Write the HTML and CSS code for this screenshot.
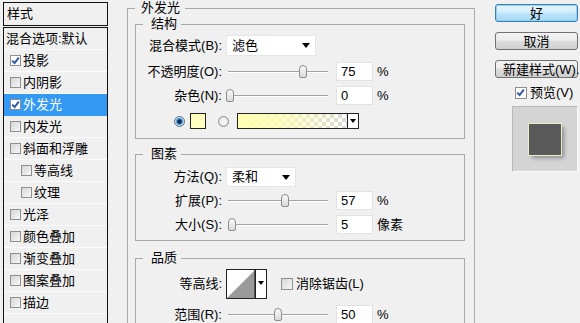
FILE: index.html
```html
<!DOCTYPE html>
<html lang="zh-CN">
<head>
<meta charset="utf-8">
<title>图层样式</title>
<link rel="stylesheet" href="styles.css">
</head>
<body>
<div class="dialog">
  <nav class="side">
    <div class="side-head">样式</div>
    <ul class="side-list">
      <li class="item plain">混合选项:默认</li>
      <li class="item"><span class="cb on"><svg viewBox="0 0 9 9"><path d="M1.2 4.6 L3.6 7 L7.8 1.6" /></svg></span>投影</li>
      <li class="item"><span class="cb"></span>内阴影</li>
      <li class="item sel"><span class="cb on"><svg viewBox="0 0 9 9"><path d="M1.2 4.6 L3.6 7 L7.8 1.6" /></svg></span>外发光</li>
      <li class="item"><span class="cb"></span>内发光</li>
      <li class="item"><span class="cb"></span>斜面和浮雕</li>
      <li class="item sub"><span class="cb"></span>等高线</li>
      <li class="item sub"><span class="cb"></span>纹理</li>
      <li class="item"><span class="cb"></span>光泽</li>
      <li class="item"><span class="cb"></span>颜色叠加</li>
      <li class="item"><span class="cb"></span>渐变叠加</li>
      <li class="item"><span class="cb"></span>图案叠加</li>
      <li class="item"><span class="cb"></span>描边</li>
    </ul>
  </nav>

  <main class="main">
    <fieldset class="group outer">
      <legend>外发光</legend>

      <fieldset class="group inner sec-struct">
        <legend>结构</legend>
        <div class="row r-blend">
          <span class="lbl">混合模式(B):</span>
          <div class="select sel-blend"><span>滤色</span><i class="arrow"></i></div>
        </div>
        <div class="row r-num r-opacity">
          <span class="lbl">不透明度(O):</span>
          <div class="slider"><span class="thumb" style="left:73px"></span></div>
          <div class="num">75</div><span class="unit">%</span>
        </div>
        <div class="row r-num r-noise">
          <span class="lbl">杂色(N):</span>
          <div class="slider"><span class="thumb" style="left:0px"></span></div>
          <div class="num">0</div><span class="unit">%</span>
        </div>
        <div class="row r-color">
          <span class="radio on"></span>
          <span class="swatch"></span>
          <span class="radio radio-2"></span>
          <div class="gradient"><span class="grad-fill"></span><span class="grad-arrow"><i class="arrow small"></i></span></div>
        </div>
      </fieldset>

      <fieldset class="group inner sec-elem">
        <legend>图素</legend>
        <div class="row r-method">
          <span class="lbl">方法(Q):</span>
          <div class="select sel-method"><span>柔和</span><i class="arrow"></i></div>
        </div>
        <div class="row r-num r-spread">
          <span class="lbl">扩展(P):</span>
          <div class="slider"><span class="thumb" style="left:55px"></span></div>
          <div class="num">57</div><span class="unit">%</span>
        </div>
        <div class="row r-num r-size">
          <span class="lbl">大小(S):</span>
          <div class="slider"><span class="thumb" style="left:2px"></span></div>
          <div class="num">5</div><span class="unit">像素</span>
        </div>
      </fieldset>

      <fieldset class="group inner sec-quality">
        <legend>品质</legend>
        <div class="row r-contour">
          <span class="lbl">等高线:</span>
          <div class="contour">
            <span class="curve"><svg viewBox="0 0 28 28" preserveAspectRatio="none"><polygon points="0,28 28,0 28,28" fill="#9a9a9a"/><rect x="27" y="0" width="1" height="28" fill="#555"/></svg></span>
            <span class="c-arrow"><i class="arrow small"></i></span>
          </div>
          <span class="cb aa"></span><span class="aa-text">消除锯齿(L)</span>
        </div>
        <div class="row r-num r-range">
          <span class="lbl">范围(R):</span>
          <div class="slider"><span class="thumb" style="left:48px"></span></div>
          <div class="num">50</div><span class="unit">%</span>
        </div>
      </fieldset>
    </fieldset>
  </main>

  <aside class="actions">
    <button class="btn btn-ok">好</button>
    <button class="btn btn-cancel">取消</button>
    <button class="btn btn-new">新建样式(W)...</button>
    <div class="preview-toggle"><span class="cb on"><svg viewBox="0 0 9 9"><path d="M1.2 4.6 L3.6 7 L7.8 1.6" /></svg></span><span>预览(V)</span></div>
    <div class="preview"><span class="preview-square"></span></div>
  </aside>
</div>
</body>
</html>
```

FILE: styles.css
```css
* { box-sizing: border-box; }
html, body { margin: 0; padding: 0; }
body {
  width: 580px;
  height: 323px;
  overflow: hidden;
  background: #f0f0f0;
  color: #000;
  font: 13px/16px "Liberation Sans", "Noto Sans CJK SC", sans-serif;
}
.dialog {
  display: flex;
  align-items: flex-start;
  padding-left: 3px;
  height: 323px;
}

/* ---------- left list ---------- */
.side { width: 105px; flex: none; margin-top: 2px; }
.side-head {
  height: 24px;
  border: 1px solid #111;
  line-height: 22px;
  padding-left: 3px;
}
.side-list {
  list-style: none;
  margin: 1px 0 0;
  padding: 0;
  border: 1px solid #111;
  height: 310px;
}
.item {
  height: 22px;
  border-bottom: 1px solid #fbfbfb;
  display: flex;
  align-items: center;
  padding-left: 6px;
  white-space: nowrap;
}
.item.plain { padding-left: 2px; }
.item.sub { padding-left: 17px; }
.item.sel { background: #3399f3; color: #fff; border-bottom-color: #3399f3; }

.cb {
  width: 11px;
  height: 11px;
  flex: none;
  display: inline-flex;
  border: 1px solid #8e8f8f;
  background: linear-gradient(135deg, #d6d6d6, #f7f7f7);
  margin-right: 2px;
}
.cb.on { background: #fff; }
.cb svg { width: 9px; height: 9px; }
.cb path { fill: none; stroke: #2c56a8; stroke-width: 1.9; }

/* ---------- main groups ---------- */
.main { width: 348px; flex: none; margin-left: 19px; }
.group {
  margin: 0;
  min-width: 0;
  border: 1px solid #a9a9a9;
}
.group > legend { line-height: 16px; padding: 0; }
.outer { padding: 0 9px 0 7px; height: 360px; }
.outer > legend { padding: 0 5px 0 6px; }
.inner { padding: 0; }
.inner > legend { margin-left: 7px; padding: 0 4px 0 8px; }

.sec-struct { padding-bottom: 9px; }
.sec-elem { margin-top: 7px; padding-bottom: 6px; }
.sec-quality { margin-top: 9px; padding-bottom: 20px; }

.row { display: flex; align-items: center; white-space: nowrap; }
.lbl { width: 86px; flex: none; text-align: right; margin-right: 4px; }

.r-blend { margin-top: 3px; height: 21px; }
.r-num { height: 19px; }
.r-opacity { margin-top: 6px; }
.r-noise { margin-top: 5px; }
.r-color { margin-top: 8px; height: 16px; }
.r-method { margin-top: 5px; height: 20px; }
.r-spread { margin-top: 4px; }
.r-size { margin-top: 5px; }
.r-contour { margin-top: 3px; height: 30px; }
.r-range { margin-top: 6px; }

.select {
  height: 100%;
  background: #fff;
  border: 1px solid #e6e6e6;
  display: flex;
  align-items: center;
  padding-left: 5px;
}
.sel-blend { width: 90px; }
.sel-method { width: 70px; }
.arrow {
  display: block;
  width: 0;
  height: 0;
  margin-left: auto;
  margin-right: 5px;
  border-top: 5px solid #000;
  border-left: 4px solid transparent;
  border-right: 4px solid transparent;
}
.arrow.small {
  margin: 0;
  border-top-width: 4px;
  border-left-width: 3px;
  border-right-width: 3px;
}

.slider {
  position: relative;
  width: 102px;
  height: 100%;
  flex: none;
  background:
    linear-gradient(#a4a4a4, #a4a4a4) no-repeat 2px 9px / 100px 1px,
    linear-gradient(#ffffff, #ffffff) no-repeat 2px 10px / 100px 1px;
}
.thumb {
  position: absolute;
  top: 3px;
  width: 8px;
  height: 13px;
  border: 1px solid #8c8c8c;
  border-radius: 4px 4px 2px 2px;
  background: linear-gradient(#fbfbfb, #d9d9d9);
}
.num {
  width: 37px;
  height: 19px;
  flex: none;
  margin-left: 8px;
  padding-left: 4px;
  line-height: 17px;
  background: #fff;
  border: 1px solid #e3e3e3;
}
.unit { margin-left: 4px; }

.radio {
  width: 11px;
  height: 11px;
  flex: none;
  border-radius: 50%;
  border: 1px solid #8c8c8c;
  background: radial-gradient(circle, #f4f4f4 0 2px, #dedede 5px);
  margin-left: 38px;
}
.radio.on {
  border-color: #5c6c7c;
  background: radial-gradient(circle, #0d2c52 0 1.5px, #2f78c0 2.5px, #8fc2ea 3.6px, #eef4f8 4.6px);
}
.radio-2 { margin-left: 12px; }
.swatch {
  width: 16px;
  height: 16px;
  flex: none;
  margin-left: 5px;
  border: 1px solid #222;
  background: #ffffbe;
}
.gradient {
  width: 122px;
  height: 16px;
  margin-left: 8px;
  display: flex;
  border: 1px solid #222;
}
.grad-fill {
  flex: 1;
  background-color: #fff;
  background-image:
    linear-gradient(to right, #ffffb4, rgba(255, 255, 180, 0.85) 35%, rgba(255, 255, 190, 0)),
    linear-gradient(45deg, #d8d8d8 25%, transparent 25%, transparent 75%, #d8d8d8 75%),
    linear-gradient(45deg, #d8d8d8 25%, transparent 25%, transparent 75%, #d8d8d8 75%);
  background-size: 100% 100%, 8px 8px, 8px 8px;
  background-position: 0 0, 0 0, 4px 4px;
}
.grad-arrow {
  width: 11px;
  flex: none;
  border-left: 1px solid #222;
  background: #fff;
  display: flex;
  align-items: center;
  justify-content: center;
}

.contour {
  width: 41px;
  height: 30px;
  flex: none;
  display: flex;
  background: #fff;
  border: 1px solid #222;
}
.curve { flex: 1; display: flex; }
.curve svg { width: 100%; height: 100%; }
.c-arrow {
  width: 11px;
  flex: none;
  border-left: 1px solid #222;
  display: flex;
  justify-content: center;
  padding-top: 11px;
}
.cb.aa { margin-left: 14px; margin-right: 3px; width: 12px; height: 12px; }

/* ---------- right column ---------- */
.actions {
  width: 83px;
  flex: none;
  margin-left: 20px;
  display: flex;
  flex-direction: column;
}
.btn {
  height: 18px;
  padding: 0;
  font: inherit;
  line-height: 15px;
  color: #000;
  border: 1px solid #707070;
  border-radius: 3px;
  background: linear-gradient(#f3f3f3, #ebebeb 45%, #dddddd 50%, #cfcfcf);
  white-space: nowrap;
  overflow: visible;
  text-align: center;
}
.btn-ok {
  margin-top: 4px;
  border-color: #3c7fb1;
  background: linear-gradient(#e6f5fd, #d3eefc 45%, #bde5fb 50%, #a6d8f4);
  box-shadow: inset 0 0 0 1px #8fd0f3;
}
.btn-cancel { margin-top: 10px; }
.btn-new { margin-top: 10px; text-align: left; padding-left: 7px; }
.preview-toggle {
  margin-top: 7px;
  height: 16px;
  display: flex;
  align-items: center;
  padding-left: 20px;
  white-space: nowrap;
}
.preview-toggle .cb { width: 12px; height: 12px; margin-right: 3px; }
.preview {
  margin-top: 5px;
  margin-left: 17px;
  width: 66px;
  height: 66px;
  display: flex;
  align-items: center;
  justify-content: center;
  background: #d4d4d4;
  border: 1px solid;
  border-color: #b8b8b8 #fbfbfb #fbfbfb #b8b8b8;
}
.preview-square {
  width: 32px;
  height: 31px;
  background: #595959;
  box-shadow: 0 0 0 1px #ecedc8, 3px 3px 4px rgba(0, 0, 0, 0.35);
}
```
